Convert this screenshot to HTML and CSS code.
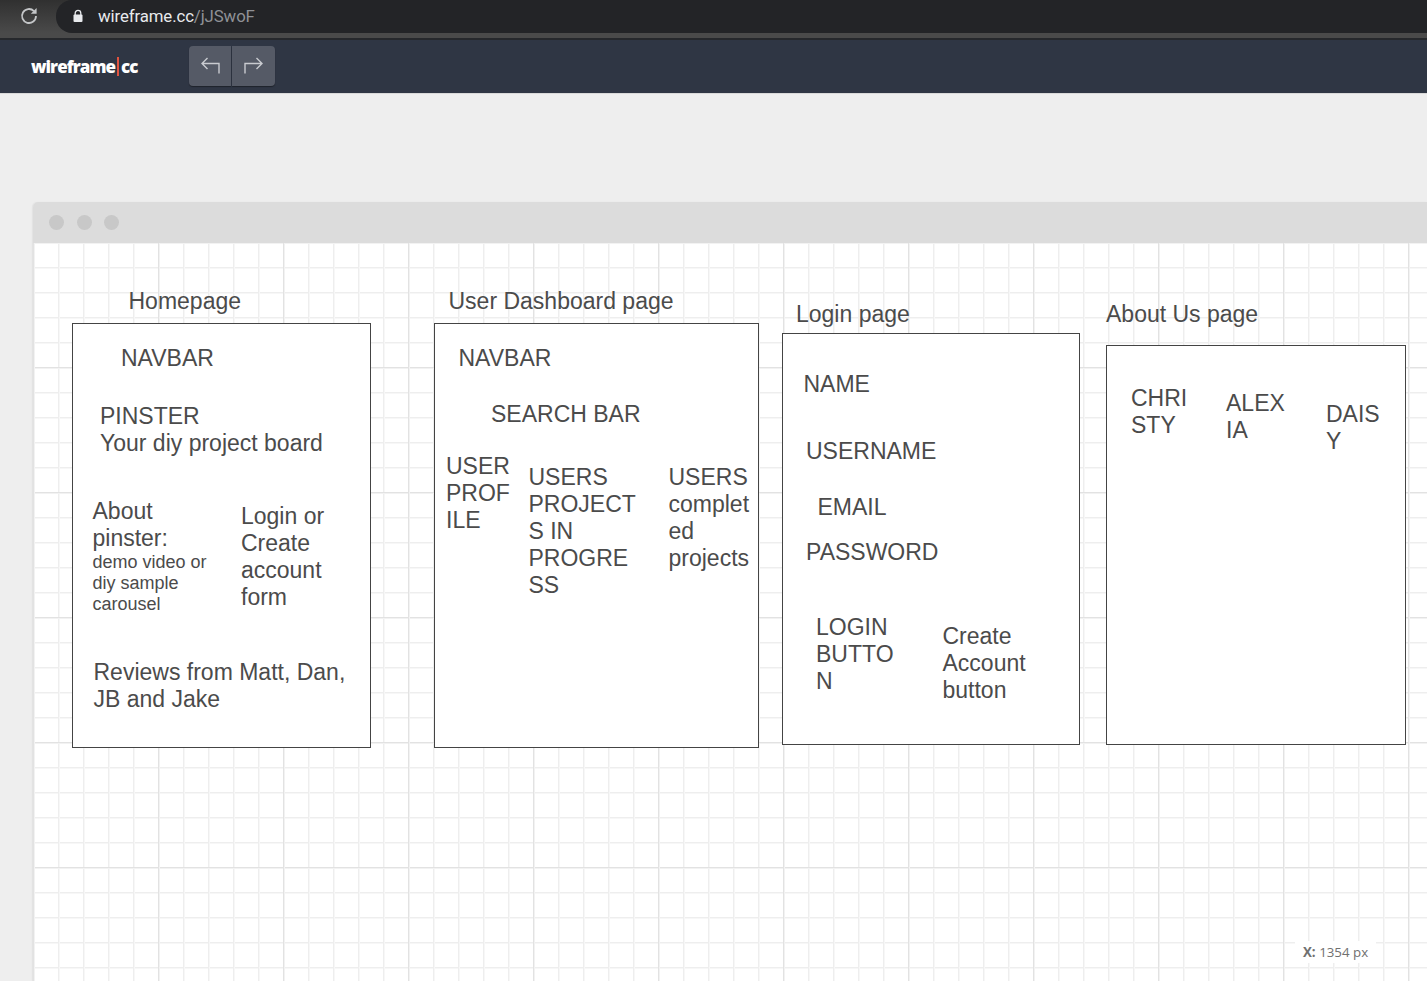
FILE: index.html
```html
<!DOCTYPE html>
<html lang="en">
<head>
    <meta charset="UTF-8">
    <title>wireframe.cc</title>
    <link rel="stylesheet" href="styles.css">
</head>
<body>
    <div class="browser-bar">
        <svg class="reload" width="20" height="20" viewBox="0 0 20 20"><path d="M17 11a7 7 0 1 1-2.05-4.95" fill="none" stroke="#c4c6c8" stroke-width="1.8"/><path d="M17.6 3v5.8h-5.8z" fill="#c4c6c8"/></svg>
        <div class="url-pill">
            <svg class="lock" width="12" height="14" viewBox="0 0 12 14"><path d="M3.2 6V4.2a2.8 2.8 0 0 1 5.6 0V6" fill="none" stroke="#e8eaed" stroke-width="1.3"/><rect x="1.5" y="5.5" width="9" height="7.5" rx="1" fill="#e8eaed"/></svg>
            <span class="url-host">wireframe.cc</span><span class="url-path">/jJSwoF</span>
        </div>
    </div>

    <div class="toolbar">
        <div class="logo">wireframe<span class="logo-sep"></span>cc</div>
        <div class="btn-group">
            <div class="btn">
                <svg width="20" height="18" viewBox="0 0 20 18"><path d="M19 16.5V6.5H2M7.5 1 2 6.5 7.5 12" fill="none" stroke="#c9cbd0" stroke-width="1.4"/></svg>
            </div>
            <div class="btn">
                <svg width="20" height="18" viewBox="0 0 20 18"><path d="M1 16.5V6.5h17M12.5 1 18 6.5 12.5 12" fill="none" stroke="#c9cbd0" stroke-width="1.4"/></svg>
            </div>
        </div>
    </div>

    <div class="workspace">
        <div class="window">
            <div class="window-bar">
                <span class="dot"></span>
                <span class="dot"></span>
                <span class="dot"></span>
            </div>
            <div class="canvas">
                <div class="label t-homepage">Homepage</div>
                <div class="box box-home"></div>
                <div class="label t-nav1">NAVBAR</div>
                <div class="label t-pinster">PINSTER<br>Your diy project board</div>
                <div class="label t-about">About<br>pinster:<br><span class="small">demo video or<br>diy sample<br>carousel</span></div>
                <div class="label t-login-form">Login or<br>Create<br>account<br>form</div>
                <div class="label t-reviews">Reviews from Matt, Dan,<br>JB and Jake</div>

                <div class="label t-dash">User Dashboard page</div>
                <div class="box box-dash"></div>
                <div class="label t-nav2">NAVBAR</div>
                <div class="label t-search">SEARCH BAR</div>
                <div class="label t-profile">USER<br>PROF<br>ILE</div>
                <div class="label t-progress">USERS<br>PROJECT<br>S IN<br>PROGRE<br>SS</div>
                <div class="label t-completed">USERS<br>complet<br>ed<br>projects</div>

                <div class="label t-loginpage">Login page</div>
                <div class="box box-login"></div>
                <div class="label t-name">NAME</div>
                <div class="label t-username">USERNAME</div>
                <div class="label t-email">EMAIL</div>
                <div class="label t-password">PASSWORD</div>
                <div class="label t-loginbtn">LOGIN<br>BUTTO<br>N</div>
                <div class="label t-create">Create<br>Account<br>button</div>

                <div class="label t-aboutpage">About Us page</div>
                <div class="box box-aboutus"></div>
                <div class="label t-christy">CHRI<br>STY</div>
                <div class="label t-alexia">ALEX<br>IA</div>
                <div class="label t-daisy">DAIS<br>Y</div>

                <div class="coords"><b>X:</b> 1354 px</div>
            </div>
        </div>
    </div>
</body>
</html>
```
FILE: styles.css
```css
html, body {
    margin: 0;
    padding: 0;
}
body {
    width: 1427px;
    height: 981px;
    overflow: hidden;
    background-color: #eeeeee;
    font-family: "Liberation Sans", Arial, sans-serif;
    display: flex;
    flex-direction: column;
}
.browser-bar {
    height: 33px;
    flex: none;
    background: linear-gradient(to bottom, #303030, #4a4a4a);
    border-bottom: 5px solid #4a4a4a;
    display: flex;
    align-items: flex-start;
    padding-left: 19px;
}
.reload {
    margin-top: 5px;
}
.url-pill {
    margin-left: 17px;
    flex: 1;
    height: 33px;
    background-color: #232427;
    border-radius: 16px 0 0 16px;
    display: flex;
    align-items: center;
    padding-left: 16px;
    padding-bottom: 2px;
    box-sizing: border-box;
    font-family: Roboto, sans-serif;
    font-size: 16.8px;
    letter-spacing: -0.1px;
}
.lock {
    margin-right: 14px;
}
.url-host {
    color: #e8eaed;
}
.url-path {
    color: #8f9196;
}
.toolbar {
    height: 52px;
    padding-bottom: 1px;
    flex: none;
    background-color: #2f3644;
    border-top: 2px solid #26282c;
    border-bottom: 1px solid #d9d9d9;
    display: flex;
    align-items: center;
    padding-left: 31px;
}
.logo {
    width: 158px;
    color: #fff;
    font-family: "Open Sans", sans-serif;
    font-weight: 800;
    font-size: 17px;
    letter-spacing: -0.95px;
    display: flex;
    align-items: center;
}
.logo-sep {
    width: 2.5px;
    height: 19px;
    margin: 0 2px 0 1.5px;
    background-color: #e2533f;
}
.btn-group {
    display: flex;
    gap: 1px;
}
.btn {
    width: 42px;
    height: 40px;
    background-color: #555a66;
    box-shadow: 0 1px 1px #1f232c;
    display: flex;
    align-items: center;
    justify-content: center;
}
.btn:first-child {
    border-radius: 4px 0 0 4px;
}
.btn:last-child {
    width: 43px;
    border-radius: 0 4px 4px 0;
}
.workspace {
    flex: 1;
    padding: 108px 0 0 33px;
}
.window {
    height: 100%;
    border-radius: 5px 0 0 0;
    box-shadow: -1px 0 1px #e2e2e2;
    display: flex;
    flex-direction: column;
}
.window-bar {
    height: 40px;
    padding-bottom: 1px;
    flex: none;
    background-color: #dcdcdc;
    border-radius: 5px 0 0 0;
    display: flex;
    align-items: center;
    gap: 12.5px;
    padding-left: 16px;
}
.dot {
    width: 15px;
    height: 15px;
    border-radius: 50%;
    background-color: #c8c8c8;
}
/* grid: 25px minor, 125px major */
.canvas {
    flex: 1;
    position: relative;
    background-color: #fff;
    background-image:
        linear-gradient(to right, #e2e2e2 1px, #f2f2f2 1px, #f2f2f2 2px, transparent 2px),
        linear-gradient(to bottom, #e2e2e2 1px, #f2f2f2 1px, #f2f2f2 2px, transparent 2px),
        linear-gradient(to right, #eeeeee 1px, #f7f7f7 1px, #f7f7f7 2px, transparent 2px),
        linear-gradient(to bottom, #eeeeee 1px, #f7f7f7 1px, #f7f7f7 2px, transparent 2px);
    background-size: 125px 125px, 125px 125px, 25px 25px, 25px 25px;
    background-position: 0 0, 0 -1px, 0 0, 0 -1px;
}
.label {
    position: absolute;
    color: #4b4b4b;
    font-size: 23px;
    line-height: 27px;
    white-space: nowrap;
}
.small {
    font-size: 18px;
    line-height: 21px;
    display: block;
}
.box {
    position: absolute;
    background-color: #fff;
    border: 1px solid #444;
    box-sizing: border-box;
}
.box-home { left: 39px; top: 80px; width: 299px; height: 425px; }
.box-dash { left: 401px; top: 80px; width: 325px; height: 425px; }
.box-login { left: 749px; top: 90px; width: 298px; height: 412px; }
.box-aboutus { left: 1073px; top: 102px; width: 300px; height: 400px; }

.t-homepage { left: 95.5px; top: 45px; }
.t-nav1 { left: 88px; top: 102px; }
.t-pinster { left: 67px; top: 160px; }
.t-about { left: 59.5px; top: 255px; }
.t-login-form { left: 208px; top: 260px; }
.t-reviews { left: 60.5px; top: 416px; }

.t-dash { left: 415.5px; top: 45px; }
.t-nav2 { left: 425.5px; top: 102px; }
.t-search { left: 458px; top: 158px; }
.t-profile { left: 413px; top: 210px; }
.t-progress { left: 495.5px; top: 221px; }
.t-completed { left: 635.5px; top: 221px; }

.t-loginpage { left: 763px; top: 58px; }
.t-name { left: 770.5px; top: 128px; }
.t-username { left: 773px; top: 195px; }
.t-email { left: 784.5px; top: 251px; }
.t-password { left: 773px; top: 296px; }
.t-loginbtn { left: 783px; top: 371px; }
.t-create { left: 909.5px; top: 380px; }

.t-aboutpage { left: 1073px; top: 58px; }
.t-christy { left: 1098px; top: 142px; }
.t-alexia { left: 1193px; top: 147px; }
.t-daisy { left: 1293px; top: 158px; }

.coords {
    position: absolute;
    left: 1262px;
    top: 698px;
    padding: 2px 8px;
    background-color: #fff;
    color: #707070;
    font-family: "Open Sans", sans-serif;
    font-size: 13.3px;
    line-height: 18px;
}
```
